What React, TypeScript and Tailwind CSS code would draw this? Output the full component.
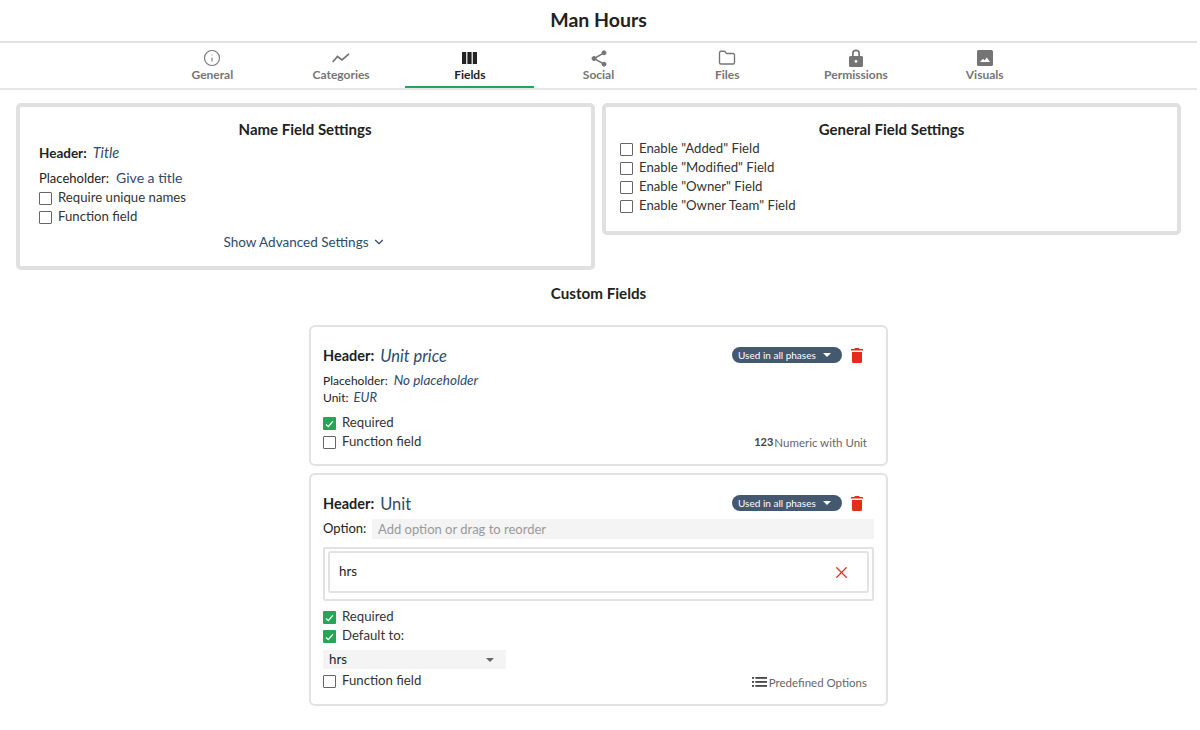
import React from "react";
import { Info, Folder, ChevronDown, X } from "lucide-react";

const Tab = ({ label, active, icon }: { label: string; active?: boolean; icon: React.ReactNode }) => (
  <div className={`flex-1 h-[45px] flex flex-col items-center pt-[6px] ${active ? "border-b-2 border-[#27a556] text-[#222]" : "text-[#757575]"}`}>
    <div className="h-[18px] flex items-center justify-center">{icon}</div>
    <div className="text-[12px] leading-[15px] font-bold">{label}</div>
  </div>
);

const Check = ({ on }: { on?: boolean }) =>
  on ? (
    <span className="w-[13px] h-[13px] bg-[#27a556] rounded-[1px] flex items-center justify-center shrink-0">
      <svg width="9" height="8" viewBox="0 0 9 8" fill="none" stroke="#fff" strokeWidth="1.2"><path d="M1 4.500 3.300 6.700 8 1.200" /></svg>
    </span>
  ) : (
    <span className="block w-[13px] h-[13px] border-[1.5px] border-[#666] rounded-[1px] shrink-0 bg-white" />
  );

const CheckRow = ({ label, on }: { label: string; on?: boolean }) => (
  <div className="h-[19px] flex items-center gap-[6px] text-[13.200px] text-[#333]">
    <span className="block mt-[2px]"><Check on={on} /></span>
    <span>{label}</span>
  </div>
);

const Trash = () => (
  <svg width="12" height="15" viewBox="0 0 12 15" fill="#e32d1c"><path d="M4 0h4l.6 1H12v1.600H0V1h3.400zM1 4h10v9.500A1.500 1.500 0 0 1 9.500 15h-7A1.500 1.500 0 0 1 1 13.500z" /></svg>
);

const Phase = () => (
  <div className="w-[110px] h-[16px] rounded-full bg-[#44586f] flex items-center pl-[6px] text-white text-[10px] leading-none">
    <span>Used in all phases</span>
    <span className="ml-[7px] w-0 h-0 border-l-[4px] border-r-[4px] border-t-[4px] border-l-transparent border-r-transparent border-t-white" />
  </div>
);

const Val = ({ c, children }: { c: string; children: React.ReactNode }) => <span className={`italic text-[#2f4a6b] ${c}`}>{children}</span>;

export default function App() {
  return (
    <div className="w-[1197px] h-[730px] bg-white overflow-hidden text-[#222]" style={{ fontFamily: '"Lato", "Noto Sans", sans-serif' }}>
      <div className="h-[43px] flex items-center justify-center text-[19.500px] font-bold border-b-2 border-[#e2e2e2] pb-[1px]">Man Hours</div>
      <div className="h-[47px] border-b-2 border-[#e6e6e6]">
        <div className="w-[901px] mx-auto flex">
          <Tab label="General" icon={<Info size={18} strokeWidth={1.5} />} />
          <Tab label="Categories" icon={<svg width="18" height="10" viewBox="0 0 18 10" fill="none" stroke="currentColor" strokeWidth="1.7"><path d="M.7 9 5.500 3.500 10 7 17 .8" /></svg>} />
          <Tab active label="Fields" icon={<svg width="15" height="12" viewBox="0 0 15 12" fill="currentColor"><rect width="4.200" height="12" /><rect x="5.400" width="4.200" height="12" /><rect x="10.800" width="4.200" height="12" /></svg>} />
          <Tab label="Social" icon={<svg width="16" height="17" viewBox="0 0 16 17" fill="currentColor" stroke="currentColor"><circle cx="13" cy="2.800" r="2" /><circle cx="3" cy="8.500" r="2" /><circle cx="13" cy="14.200" r="2" /><path fill="none" strokeWidth="1.500" d="M13 2.800 3 8.500l10 5.700" /></svg>} />
          <Tab label="Files" icon={<Folder size={18} strokeWidth={1.8} />} />
          <Tab label="Permissions" icon={<svg width="14" height="18" viewBox="0 0 14 18" fill="currentColor"><path d="M3 7V4.500a4 4 0 0 1 8 0V7h1.500A1.500 1.500 0 0 1 14 8.500v8a1.500 1.500 0 0 1-1.500 1.500h-11A1.500 1.500 0 0 1 0 16.500v-8A1.500 1.500 0 0 1 1.500 7zm1.700 0h4.600V4.500a2.300 2.300 0 0 0-4.600 0zM7 11a1.400 1.400 0 1 0 0 2.800A1.400 1.400 0 0 0 7 11z" fillRule="evenodd" /></svg>} />
          <Tab label="Visuals" icon={<svg width="16" height="16" viewBox="0 0 16 16" fill="currentColor"><path fillRule="evenodd" d="M1.500 0h13A1.500 1.500 0 0 1 16 1.500v13a1.500 1.500 0 0 1-1.500 1.500h-13A1.500 1.500 0 0 1 0 14.500v-13A1.500 1.500 0 0 1 1.500 0zM3 12h10L9.800 7.500 7.500 10.500 6 8.800z" /></svg>} />
        </div>
      </div>

      <div className="flex items-start gap-[7px] pl-[16px] mt-[13px]">
        <div className="w-[579px] h-[167px] border-4 border-[#e0e0e0] rounded-[5px] pl-[19px] pr-[20px] pt-[12px]">
          <div className="text-center text-[15px] font-bold leading-[20px]">Name Field Settings</div>
          <div className="flex items-baseline mt-[3px] h-[22px] text-[13.500px]">
            <span className="font-bold mr-[6px]">Header:</span><Val c="text-[14.500px]">Title</Val>
          </div>
          <div className="flex items-baseline mt-[3px] h-[21px] text-[13px]">
            <span className="mr-[7px]">Placeholder:</span><Val c="text-[14px] not-italic">Give a title</Val>
          </div>
          <CheckRow label="Require unique names" />
          <CheckRow label="Function field" />
          <div className="flex items-center justify-center gap-[3px] mt-[6px] text-[13.500px] text-[#2f4a6b] pr-[1px]">
            Show Advanced Settings <ChevronDown size={14} strokeWidth={2} />
          </div>
        </div>
        <div className="w-[579px] h-[132px] border-4 border-[#e0e0e0] rounded-[5px] px-[14px] pt-[12px]">
          <div className="text-center text-[15px] font-bold leading-[20px]">General Field Settings</div>
          <div>
            <CheckRow label={'Enable "Added" Field'} />
            <CheckRow label={'Enable "Modified" Field'} />
            <CheckRow label={'Enable "Owner" Field'} />
            <CheckRow label={'Enable "Owner Team" Field'} />
          </div>
        </div>
      </div>

      <div className="text-center text-[15.200px] font-bold leading-[20px] mt-[13px]">Custom Fields</div>

      <div className="w-[579px] ml-[309px] mt-[22px] flex flex-col gap-[7px]">
        <div className="h-[141px] border-2 border-[#e2e2e2] rounded-[6px] pl-[12px] pr-[20px] pt-[18px] relative">
          <div className="flex items-center h-[22px]">
            <span className="text-[14.500px] font-bold mr-[6px]">Header:</span>
            <Val c="text-[16.500px]">Unit price</Val>
            <div className="ml-auto mr-[3px] flex items-center gap-[9px]"><span className="-mt-[2px]"><Phase /></span><span className="block -mt-[1px]"><Trash /></span></div>
          </div>
          <div className="flex items-baseline h-[18px] mt-[3px] text-[12px]">
            <span className="mr-[6px]">Placeholder:</span><Val c="text-[13.500px]">No placeholder</Val>
          </div>
          <div className="flex items-baseline h-[18px] text-[12px]">
            <span className="mr-[5px]">Unit:</span><Val c="text-[13px]">EUR</Val>
          </div>
          <div className="mt-[7px]">
            <CheckRow on label="Required" />
            <CheckRow label="Function field" />
          </div>
          <div className="absolute right-[19px] bottom-[13px] flex items-center text-[11.500px] text-[#666] gap-[1px]">
            <span className="font-bold text-[#444] text-[11px]">123</span>Numeric with Unit
          </div>
        </div>

        <div className="h-[233px] border-2 border-[#e2e2e2] rounded-[6px] pl-[12px] pr-[12px] pt-[18px] relative">
          <div className="flex items-center h-[22px]">
            <span className="text-[14.500px] font-bold mr-[6px]">Header:</span>
            <Val c="text-[16.500px] not-italic">Unit</Val>
            <div className="ml-auto mr-[11px] flex items-center gap-[9px]"><span className="-mt-[2px]"><Phase /></span><span className="block -mt-[1px]"><Trash /></span></div>
          </div>
          <div className="flex items-center h-[20px] mt-[4px] text-[13px]">
            <span className="w-[49px]">Option:</span>
            <div className="flex-1 h-[20px] bg-[#f4f4f4] text-[#999] pl-[6px] leading-[20px]">Add option or drag to reorder</div>
          </div>
          <div className="h-[54px] border-2 border-[#e2e2e2] rounded-[2px] mt-[8px] pt-[2px] px-[3px]">
            <div className="h-[42px] border-2 border-[#e2e2e2] rounded-[3px] flex items-center justify-between pl-[9px] pr-[16px] text-[13.300px]">
              <span>hrs</span>
              <X size={19} strokeWidth={1.6} className="text-[#dc3224]" />
            </div>
          </div>
          <div className="mt-[6px]">
            <CheckRow on label="Required" />
            <CheckRow on label="Default to:" />
          </div>
          <div className="w-[183px] h-[19px] bg-[#f4f4f4] mt-[5px] flex items-center justify-between pl-[6px] pr-[12px] text-[13.300px]">
            <span>hrs</span>
            <span className="w-0 h-0 border-l-[4px] border-r-[4px] border-t-[4px] border-l-transparent border-r-transparent border-t-[#666]" />
          </div>
          <div className="mt-[2px]"><CheckRow label="Function field" /></div>
          <div className="absolute right-[19px] bottom-[13px] flex items-center text-[11.500px] text-[#666] gap-[2px]">
            <svg width="15" height="10" viewBox="0 0 15 10" fill="#444"><rect width="2" height="1.800" /><rect y="4" width="2" height="1.800" /><rect y="8" width="2" height="1.800" /><rect x="3.300" width="11.700" height="1.800" /><rect x="3.300" y="4" width="11.700" height="1.800" /><rect x="3.300" y="8" width="11.700" height="1.800" /></svg>
            Predefined Options
          </div>
        </div>
      </div>
    </div>
  );
}
